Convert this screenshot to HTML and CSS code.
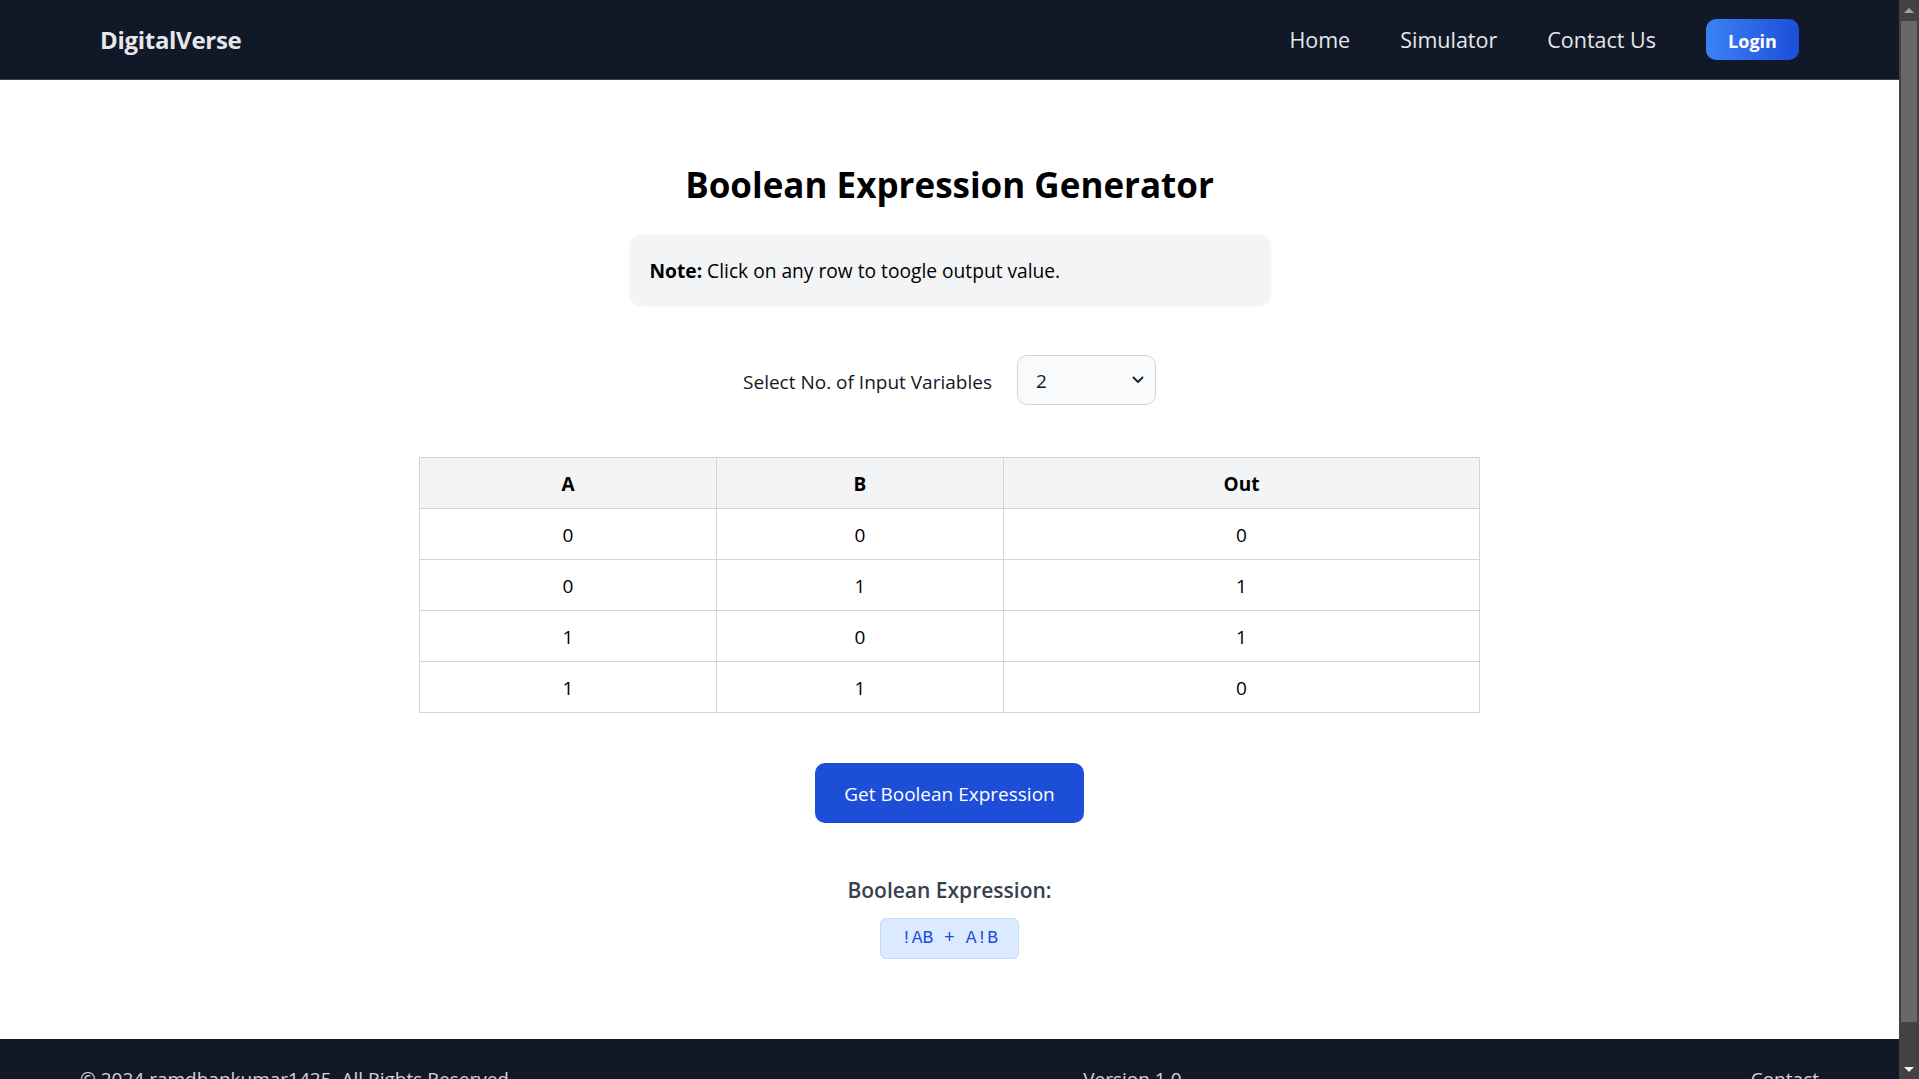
FILE: index.html
```html
<!DOCTYPE html>
<html lang="en">
<head>
<meta charset="utf-8">
<title>DigitalVerse - Boolean Expression Generator</title>
<link rel="stylesheet" href="styles.css">
</head>
<body>
<div class="viewport">
  <div class="page">
    <nav class="nav">
      <div class="brand">DigitalVerse</div>
      <div class="nav-links">
        <a class="nav-link" href="#">Home</a>
        <a class="nav-link" href="#">Simulator</a>
        <a class="nav-link" href="#">Contact Us</a>
        <button class="login">Login</button>
      </div>
    </nav>
    <main class="main">
      <h1 class="title">Boolean Expression Generator</h1>
      <div class="note"><strong>Note:</strong> Click on any row to toogle output value.</div>
      <div class="select-row">
        <span class="select-label">Select No. of Input Variables</span>
        <div class="select">
          <span class="select-value">2</span>
          <svg class="chevron" width="12" height="8" viewBox="0 0 12 8"><path d="M1.5 1.5 L6 6 L10.5 1.5" fill="none" stroke="#1f2937" stroke-width="2" stroke-linecap="round" stroke-linejoin="round"/></svg>
        </div>
      </div>
      <table class="truth">
        <thead>
          <tr><th class="col-a">A</th><th class="col-b">B</th><th class="col-out">Out</th></tr>
        </thead>
        <tbody>
          <tr><td>0</td><td>0</td><td>0</td></tr>
          <tr><td>0</td><td>1</td><td>1</td></tr>
          <tr><td>1</td><td>0</td><td>1</td></tr>
          <tr><td>1</td><td>1</td><td>0</td></tr>
        </tbody>
      </table>
      <button class="generate">Get Boolean Expression</button>
      <h2 class="result-title">Boolean Expression:</h2>
      <div class="expr">!AB + A!B</div>
    </main>
    <footer class="footer">
      <span>© 2024 ramdhankumar1425. All Rights Reserved.</span>
      <span>Version 1.0</span>
      <span>Contact</span>
    </footer>
  </div>
  <div class="scrollbar">
    <div class="sb-btn"><span class="tri-up"></span></div>
    <div class="sb-thumb"></div>
    <div class="sb-rest"></div>
    <div class="sb-btn"><span class="tri-down"></span></div>
  </div>
</div>
</body>
</html>
```

FILE: styles.css
```css
html, body {
  margin: 0;
  padding: 0;
  height: 100%;
  overflow: hidden;
}
body {
  font-family: "Open Sans", "Noto Sans", sans-serif;
  color: #000;
}
.viewport {
  display: flex;
  height: 100vh;
}
.page {
  flex: 1;
  overflow: hidden;
  background: #fff;
}
.nav {
  height: 80px;
  box-sizing: border-box;
  border-bottom: 1px solid #374151;
  background: #111827;
  display: flex;
  align-items: center;
  justify-content: space-between;
  padding: 0 100px;
}
.brand {
  color: #e5e7eb;
  font-size: 24px;
  font-weight: 700;
  letter-spacing: -0.3px;
}
.nav-links {
  display: flex;
  align-items: center;
  gap: 50px;
}
.nav-link {
  color: #e5e7eb;
  font-size: 21.5px;
  text-decoration: none;
}
.login {
  height: 41px;
  width: 93px;
  border: none;
  border-radius: 10px;
  background: linear-gradient(to right, #3b82f6, #1d4ed8);
  color: #fff;
  font-family: inherit;
  font-size: 18px;
  font-weight: 700;
  padding: 2px 0 0;
}
.main {
  padding: 80px 0;
  display: flex;
  flex-direction: column;
  align-items: center;
}
.title {
  margin: 0 0 28px;
  padding-top: 2px;
  font-size: 35px;
  line-height: 45px;
  font-weight: 700;
  color: #000;
}
.note {
  width: 640px;
  box-sizing: border-box;
  padding: 21px 20px 19px;
  background: #f3f4f6;
  border-radius: 10px;
  box-shadow: 0 1px 3px rgba(0, 0, 0, 0.06);
  font-size: 19.2px;
  line-height: 30px;
  margin-bottom: 50px;
}
.select-row {
  display: flex;
  align-items: center;
  gap: 25px;
  margin-bottom: 52px;
}
.select-label {
  font-size: 19px;
  color: #111827;
  padding-top: 3px;
}
.select {
  width: 139px;
  height: 50px;
  box-sizing: border-box;
  border: 1px solid #d1d5db;
  border-radius: 10px;
  background: #f9fafb;
  padding: 0 11px 0 18px;
  display: flex;
  align-items: center;
  justify-content: space-between;
  font-size: 19px;
  color: #111827;
}
.select-value {
  padding-top: 2px;
}
.truth {
  width: 1060px;
  table-layout: fixed;
  border-collapse: collapse;
  margin-bottom: 50px;
  border: 1px solid #d1d5db;
}
.truth th, .truth td {
  box-sizing: border-box;
  border: 1px solid #d1d5db;
  padding: 11px 10px 9px;
  text-align: center;
  font-size: 19px;
  line-height: 30px;
}
.truth th {
  background: #f3f4f6;
  font-weight: 700;
}
.col-a { width: 297px; }
.col-b { width: 287px; }
.col-out { width: 476px; }
.generate {
  padding: 16px 29px 14px;
  background: #1d4ed8;
  color: #fff;
  border: none;
  border-radius: 10px;
  font-family: inherit;
  font-size: 19px;
  line-height: 30px;
  margin-bottom: 50px;
}
.result-title {
  margin: 0 0 10px;
  font-size: 21px;
  line-height: 35px;
  font-weight: 600;
  color: #374151;
}
.expr {
  background: #dbeafe;
  border: 1px solid #bfdbfe;
  border-radius: 6px;
  padding: 7px 20px;
  color: #1d4ed8;
  font-family: "Liberation Mono", "DejaVu Sans Mono", monospace;
  font-size: 18px;
  line-height: 25px;
  white-space: pre;
}
.footer {
  background: #111827;
  color: #d1d5db;
  padding: 25px 80px;
  display: flex;
  justify-content: space-between;
  font-size: 19px;
  line-height: 30px;
}
.scrollbar {
  width: 20px;
  flex: none;
  background: #424242;
  display: flex;
  flex-direction: column;
}
.sb-btn {
  height: 20px;
  display: flex;
  align-items: center;
  justify-content: center;
}
.sb-thumb {
  height: 1001px;
  margin: 1px 2px 0;
  background: #686868;
}
.sb-rest {
  flex: 1;
}
.tri-up {
  width: 0;
  height: 0;
  border-left: 5px solid transparent;
  border-right: 5px solid transparent;
  border-bottom: 5px solid #a3a3a3;
}
.tri-down {
  width: 0;
  height: 0;
  border-left: 5px solid transparent;
  border-right: 5px solid transparent;
  border-top: 5px solid #f0f0f0;
}
```
